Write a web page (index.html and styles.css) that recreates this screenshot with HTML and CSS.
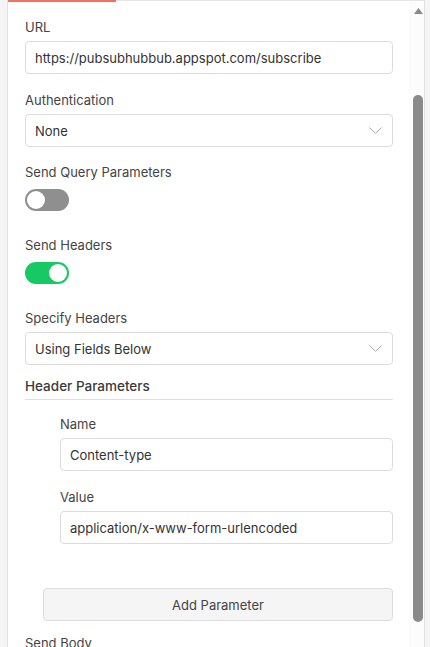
FILE: index.html
```html
<!DOCTYPE html>
<html>
<head>
<meta charset="utf-8">
<link rel="stylesheet" href="styles.css">
</head>
<body>
<div class="panel">
  <div class="tab-indicator"></div>
  <div class="content">
    <div class="field">
      <div class="label">URL</div>
      <div class="input">https://pubsubhubbub.appspot.com/subscribe</div>
    </div>
    <div class="field tight">
      <div class="label">Authentication</div>
      <div class="input select">None
        <svg class="chev" width="13" height="7" viewBox="0 0 13 7"><path d="M0.5 0.5 L6.5 6.3 L12.5 0.5" fill="none" stroke="#a8a8a8" stroke-width="1"/></svg>
      </div>
    </div>
    <div class="field toggle-field">
      <div class="label">Send Query Parameters</div>
      <div class="toggle off"><span class="knob"></span></div>
    </div>
    <div class="field toggle-field">
      <div class="label">Send Headers</div>
      <div class="toggle on"><span class="knob"></span></div>
    </div>
    <div class="field">
      <div class="label">Specify Headers</div>
      <div class="input select">Using Fields Below
        <svg class="chev" width="13" height="7" viewBox="0 0 13 7"><path d="M0.5 0.5 L6.5 6.3 L12.5 0.5" fill="none" stroke="#a8a8a8" stroke-width="1"/></svg>
      </div>
    </div>
    <div class="section-title">Header Parameters</div>
    <div class="nested">
      <div class="field">
        <div class="label">Name</div>
        <div class="input">Content-type</div>
      </div>
      <div class="field">
        <div class="label">Value</div>
        <div class="input">application/x-www-form-urlencoded</div>
      </div>
    </div>
    <div class="add-row">
      <div class="button">Add Parameter</div>
    </div>
    <div class="field">
      <div class="label">Send Body</div>
    </div>
  </div>
  <div class="scrollbar">
    <svg class="arrow" width="9" height="6" viewBox="0 0 9 6"><path d="M4.5 0 L9 6 L0 6 Z" fill="#8a8a8a"/></svg>
    <div class="thumb"></div>
  </div>
</div>
</body>
</html>
```

FILE: styles.css
```css
html, body {
  margin: 0;
  padding: 0;
  background: #f5f5f5;
  font-family: Inter, "Open Sans", sans-serif;
  -webkit-font-smoothing: antialiased;
}

body {
  height: 647px;
  overflow: hidden;
}

.panel {
  position: relative;
  margin-left: 7px;
  width: 416px;
  height: 660px;
  background: #ffffff;
  border-left: 1px solid #e2e2e2;
  border-right: 1px solid #e2e2e2;
  border-top: 1px solid #e6e6e6;
  box-sizing: content-box;
}

.tab-indicator {
  position: absolute;
  top: -1px;
  left: 0;
  width: 108px;
  height: 2px;
  background: #f1735f;
}

.content {
  padding: 17px 31px 0 17px;
}

.field {
  display: flex;
  flex-direction: column;
  gap: 5px;
  margin-bottom: 17px;
}

.field.tight {
  margin-bottom: 16px;
}

.label {
  font-size: 13px;
  line-height: 18px;
  color: #444444;
}

.input {
  height: 31px;
  border: 1px solid #dcdcdc;
  border-radius: 4px;
  display: flex;
  align-items: center;
  padding: 0 9px;
  font-size: 13px;
  color: #333333;
  background: #fff;
}

.select {
  justify-content: space-between;
  padding-right: 10px;
}

.chev {
  display: block;
}

.toggle-field {
  gap: 8px;
  margin-bottom: 25px;
}

.toggle {
  position: relative;
  width: 44px;
  height: 22px;
  border-radius: 11px;
}

.toggle.off {
  background: #8f8f8f;
}

.toggle.on {
  background: #17c964;
}

.knob {
  position: absolute;
  top: 2px;
  width: 18px;
  height: 18px;
  border-radius: 50%;
  background: #ffffff;
}

.toggle.off .knob {
  left: 2px;
}

.toggle.on .knob {
  right: 2px;
}

.section-title {
  margin-top: -5px;
  font-size: 13.5px;
  font-weight: 500;
  line-height: 18px;
  color: #3a3a3a;
  padding-bottom: 4px;
  border-bottom: 1px solid #dedede;
  margin-bottom: 15px;
}

.nested {
  padding-left: 35px;
}

.add-row {
  padding-left: 18px;
  margin-top: 44px;
  margin-bottom: 13px;
}

.button {
  height: 31px;
  border: 1px solid #dcdcdc;
  border-radius: 4px;
  background: #f5f5f5;
  display: flex;
  align-items: center;
  justify-content: center;
  font-size: 13px;
  color: #444;
}

.scrollbar {
  position: absolute;
  top: 0;
  right: 0;
  width: 15px;
  height: 647px;
  background: #fcfcfc;
}

.arrow {
  position: absolute;
  top: 7px;
  left: 5px;
}

.thumb {
  position: absolute;
  top: 94px;
  left: 4px;
  width: 10px;
  height: 527px;
  border-radius: 5px;
  background: #8a8a8a;
}
```
